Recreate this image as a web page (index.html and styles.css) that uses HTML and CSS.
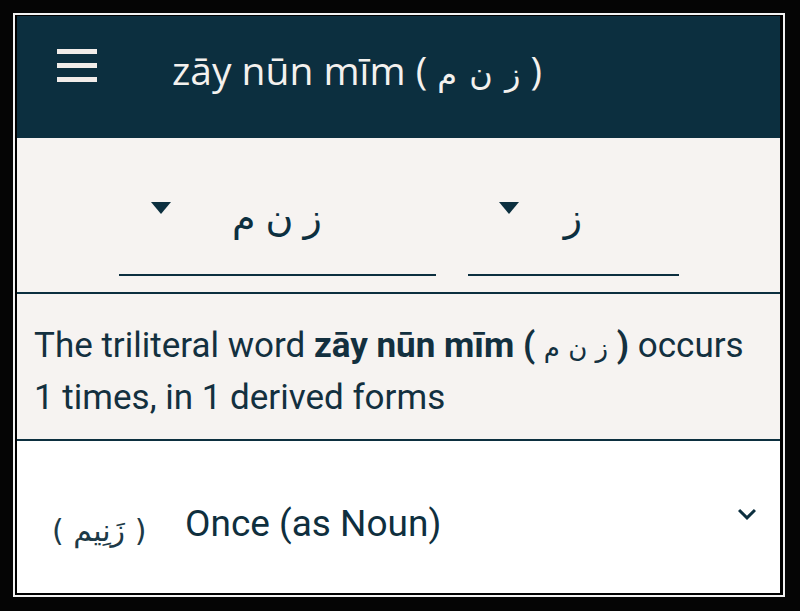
FILE: index.html
```html
<!DOCTYPE html>
<html lang="en">
<head>
<meta charset="utf-8">
<title>zāy nūn mīm</title>
<link rel="stylesheet" href="styles.css">
</head>
<body>
<div class="frame">
  <div class="app">
    <header class="topbar">
      <div class="menu" aria-label="Menu"><span></span><span></span><span></span></div>
      <h1 class="title">zāy nūn mīm ( <span class="ar">ز ن م</span> )</h1>
    </header>
    <section class="pickers">
      <div class="picker wide"><span class="caret"></span><span class="value" lang="ar">ز ن م</span></div>
      <div class="picker narrow"><span class="caret"></span><span class="value" lang="ar">ز</span></div>
    </section>
    <section class="summary">
      <p>The triliteral word <strong>zāy nūn mīm ( <span class="ar">ز ن م</span> )</strong> occurs 1 times, in 1 derived forms</p>
    </section>
    <section class="form-row">
      <span class="form-ar" lang="ar">( زَنِيم )</span>
      <span class="form-label">Once (as Noun)</span>
      <svg class="chev" viewBox="0 0 24 24" aria-hidden="true"><path d="M16.59 8.59L12 13.17 7.41 8.59 6 10l6 6 6-6z"/></svg>
    </section>
  </div>
</div>
</body>
</html>
```
FILE: styles.css
```css
html, body {
  margin: 0;
  padding: 0;
}
body {
  background: #050505;
  width: 800px;
  height: 611px;
  overflow: hidden;
  font-family: Roboto, "DejaVu Sans", sans-serif;
}
.frame {
  margin: 13px 15px 14px 13px;
  border: 2px solid #f2f2f2;
  padding: 1px 3px 2px 2px;
  background: #000;
}
.app {
  width: 763px;
  height: 577px;
  display: flex;
  flex-direction: column;
  background: #fff;
  color: #0f2f3e;
}
.topbar {
  height: 122px;
  box-sizing: border-box;
  background: #0c2f3f;
  display: flex;
  align-items: flex-start;
  padding: 33px 0 0 40px;
  gap: 75px;
}
.menu {
  display: flex;
  flex-direction: column;
  gap: 9px;
  width: 40px;
}
.menu span {
  display: block;
  height: 5px;
  background: #f1ece9;
}
.title {
  margin: 1px 0 0 0;
  font-family: "Open Sans", "DejaVu Sans", sans-serif;
  font-weight: 400;
  font-size: 39px;
  line-height: 39px;
  color: #f4f1ee;
  white-space: nowrap;
}
.title .ar {
  font-family: "DejaVu Sans", sans-serif;
  font-size: 32px;
  word-spacing: 2px;
}
.pickers {
  height: 156px;
  box-sizing: border-box;
  background: #f6f3f1;
  border-bottom: 2px solid #0c2f3f;
  display: flex;
  justify-content: center;
  align-items: flex-start;
  gap: 32px;
  padding-top: 62px;
}
.picker {
  height: 76px;
  box-sizing: border-box;
  border-bottom: 2px solid #0c2f3f;
  display: grid;
  grid-template-columns: 1fr auto 1fr;
  align-items: start;
}
.picker.wide { width: 317px; }
.picker.narrow { width: 211px; }
.caret {
  justify-self: start;
  margin: 2px 0 0 32px;
  width: 0;
  height: 0;
  border-left: 10.5px solid transparent;
  border-right: 10.5px solid transparent;
  border-top: 12px solid #0c2f3f;
}
.picker.narrow .caret { margin-left: 31px; }
.value {
  font-family: "DejaVu Sans", sans-serif;
  font-size: 38px;
  line-height: 40px;
  margin-top: -2px;
  word-spacing: -2px;
  color: #0c2f3f;
}
.summary {
  height: 147px;
  box-sizing: border-box;
  background: #f6f3f1;
  border-bottom: 2px solid #0c2f3f;
  padding: 27px 26px 0 17px;
}
.summary p {
  margin: 0;
  font-size: 35px;
  line-height: 50px;
  color: #13303f;
}
.summary strong {
  font-weight: 700;
}
.summary .ar {
  font-family: "DejaVu Sans", sans-serif;
  font-weight: 400;
  font-size: 26px;
}
.form-row {
  flex: 1;
  background: #fff;
  display: flex;
  align-items: flex-start;
  padding: 61px 15px 0 35px;
}
.form-ar {
  font-family: "DejaVu Sans", sans-serif;
  font-size: 30px;
  line-height: 44px;
  margin-top: 7px;
  width: 93px;
  white-space: nowrap;
  color: #1d3a48;
}
.form-label {
  margin-left: 40px;
  font-size: 37px;
  line-height: 44px;
  color: #0f2f3e;
}
.chev {
  margin-left: auto;
  margin-top: -6px;
  width: 36px;
  height: 36px;
  fill: #0c2f3f;
}
```
